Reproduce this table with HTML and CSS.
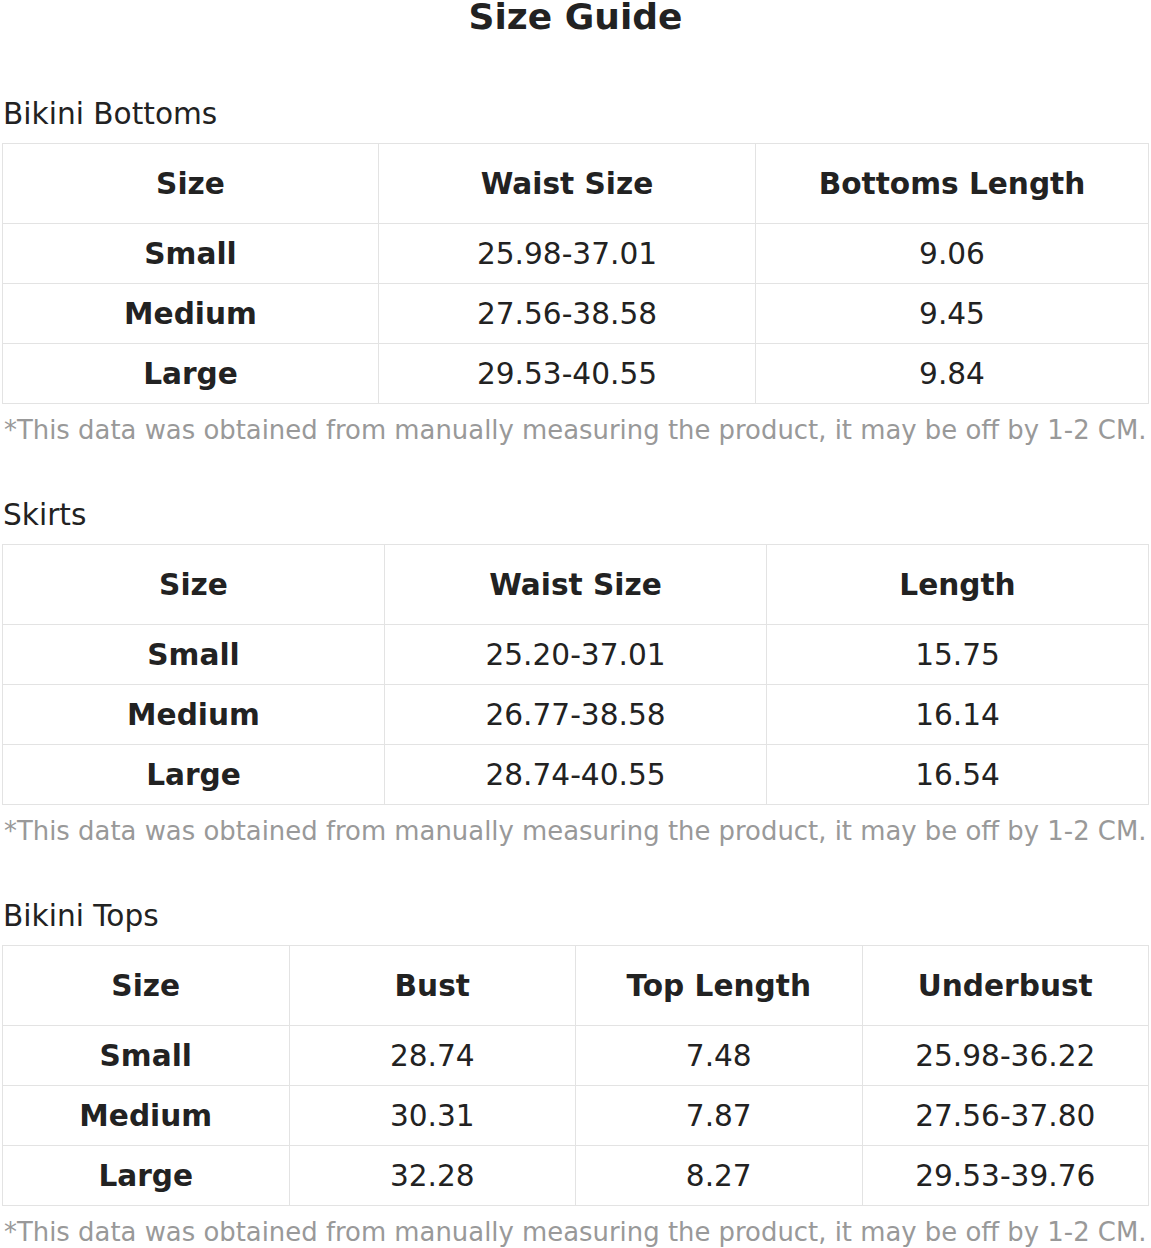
FILE: index.html
```html
<!DOCTYPE html>
<html>
<head>
<meta charset="utf-8">
<link rel="stylesheet" href="styles.css">
</head>
<body>
<h1 class="title">Size Guide</h1>

<section class="guide first">
  <h2 class="guide-name">Bikini Bottoms</h2>
  <table class="size-table">
    <colgroup><col class="col-a"><col class="col-b"><col></colgroup>
    <thead>
      <tr><th>Size</th><th>Waist Size</th><th>Bottoms Length</th></tr>
    </thead>
    <tbody>
      <tr><th>Small</th><td>25.98-37.01</td><td>9.06</td></tr>
      <tr><th>Medium</th><td>27.56-38.58</td><td>9.45</td></tr>
      <tr><th>Large</th><td>29.53-40.55</td><td>9.84</td></tr>
    </tbody>
  </table>
  <p class="note">*This data was obtained from manually measuring the product, it may be off by 1-2 CM.</p>
</section>

<section class="guide">
  <h2 class="guide-name">Skirts</h2>
  <table class="size-table">
    <thead>
      <tr><th>Size</th><th>Waist Size</th><th>Length</th></tr>
    </thead>
    <tbody>
      <tr><th>Small</th><td>25.20-37.01</td><td>15.75</td></tr>
      <tr><th>Medium</th><td>26.77-38.58</td><td>16.14</td></tr>
      <tr><th>Large</th><td>28.74-40.55</td><td>16.54</td></tr>
    </tbody>
  </table>
  <p class="note">*This data was obtained from manually measuring the product, it may be off by 1-2 CM.</p>
</section>

<section class="guide">
  <h2 class="guide-name">Bikini Tops</h2>
  <table class="size-table">
    <thead>
      <tr><th>Size</th><th>Bust</th><th>Top Length</th><th>Underbust</th></tr>
    </thead>
    <tbody>
      <tr><th>Small</th><td>28.74</td><td>7.48</td><td>25.98-36.22</td></tr>
      <tr><th>Medium</th><td>30.31</td><td>7.87</td><td>27.56-37.80</td></tr>
      <tr><th>Large</th><td>32.28</td><td>8.27</td><td>29.53-39.76</td></tr>
    </tbody>
  </table>
  <p class="note">*This data was obtained from manually measuring the product, it may be off by 1-2 CM.</p>
</section>
</body>
</html>
```
FILE: styles.css
```css
html, body {
  margin: 0;
  background: #fff;
}
body {
  padding: 0 2px;
  font-family: "DejaVu Sans", sans-serif;
  color: #222;
  font-size: 29.6px;
}
.title {
  margin: 0;
  font-size: 36px;
  line-height: 33px;
  font-weight: bold;
  text-align: center;
}
.guide {
  margin-top: 52.5px;
}
.guide.first {
  margin-top: 63.5px;
}
.guide-name {
  margin: 0 0 12px 1px;
  font-size: 29.6px;
  font-weight: normal;
  line-height: 34.5px;
}
.size-table {
  width: 100%;
  table-layout: fixed;
  border-collapse: collapse;
  border-spacing: 0;
}
.col-a {
  width: 376px;
}
.col-b {
  width: 377px;
}
.size-table th,
.size-table td {
  border: 1px solid #e3e3e3;
  text-align: center;
  line-height: 35px;
  padding: 13px 4px 11px;
  font-size: 29.6px;
  white-space: nowrap;
}
.size-table th {
  font-weight: bold;
}
.size-table td {
  font-weight: normal;
}
.size-table thead th {
  padding: 23px 4px 21px;
}
.note {
  margin: 11px 0 0 2px;
  font-size: 25.9px;
  line-height: 30px;
  color: #999;
  white-space: nowrap;
}
```
